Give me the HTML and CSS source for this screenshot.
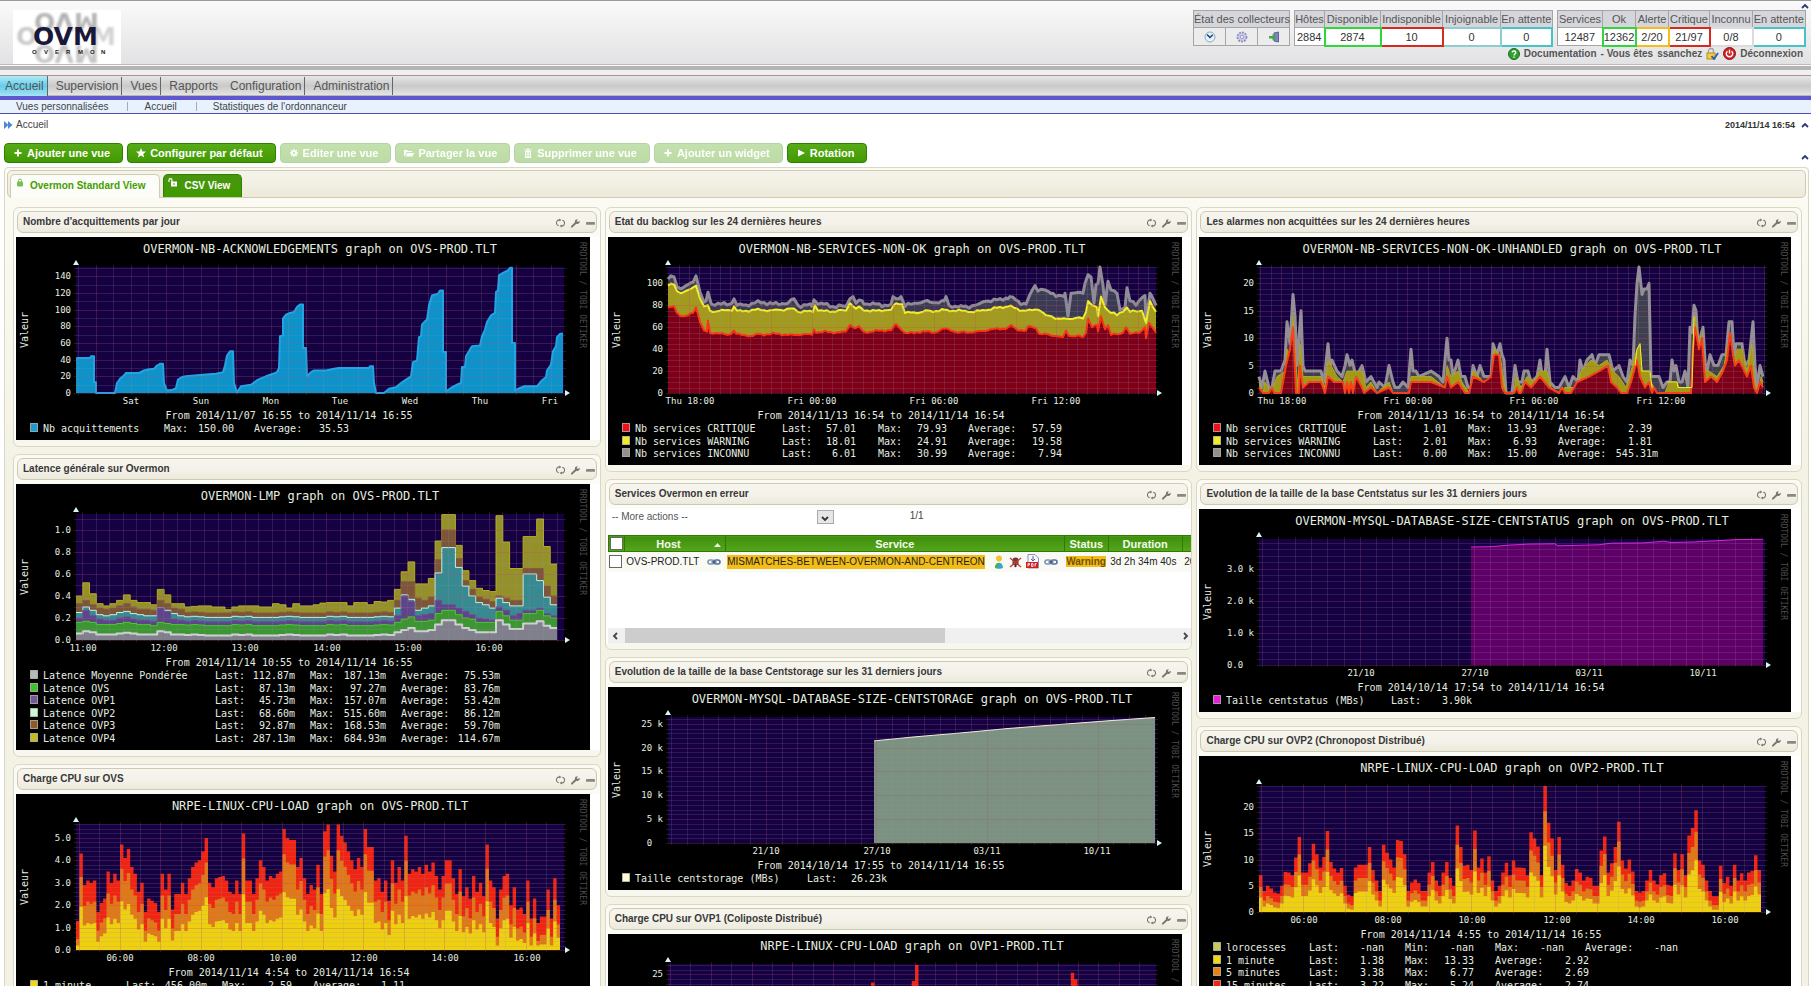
FILE: index.html
```html
<!DOCTYPE html>
<html lang="fr">
<head>
    <meta charset="UTF-8">
    <meta name="viewport" content="width=device-width, initial-scale=1.0">
    <title>Overmon - Accueil</title>
    <link rel="stylesheet" href="styles.css">
</head>
<body>
    <!-- shared icons -->
    <svg class="sprite" width="0" height="0" aria-hidden="true">
        <symbol id="i-refresh" viewBox="0 0 10 10"><path d="M4 1.5A3.3 3.3 0 0 0 3 8M6 8.5A3.3 3.3 0 0 0 7 2" fill="none" stroke="#77756c" stroke-width="1.2"/><path d="M3.5 0l2.5 1.6L3.6 3.4zM6.5 10L4 8.4l2.4-1.8z" fill="#77756c"/></symbol>
        <symbol id="i-wrench" viewBox="0 0 10 10"><path d="M1 9l4.5-4.2" stroke="#77756c" stroke-width="2.2" stroke-linecap="round"/><path d="M9.5 2.5L7.6 4 6.3 2.8 7.6.8A2.6 2.6 0 0 0 4.4 3.8L6 5.8a2.6 2.6 0 0 0 3.5-3.3z" fill="#77756c"/></symbol>
        <symbol id="i-minus" viewBox="0 0 10 10"><rect y="4" width="10" height="3" rx="1" fill="#8a887f"/></symbol>
        <symbol id="i-plus" viewBox="0 0 10 10"><path d="M5 1.5v7M1.5 5h7" stroke="#fff" stroke-width="1.8"/></symbol>
        <symbol id="i-star" viewBox="0 0 10 10"><path d="M5 0l1.4 3.4 3.6.2-2.8 2.3 1 3.6L5 7.5 1.8 9.5l1-3.6L0 3.6l3.6-.2z" fill="#fff"/></symbol>
        <symbol id="i-gear" viewBox="0 0 10 10"><path d="M5 1v8M1 5h8M2.2 2.2l5.6 5.6M7.8 2.2L2.2 7.8" stroke="#fff" stroke-width="1.4"/><circle cx="5" cy="5" r="2.6" fill="#fff"/><circle cx="5" cy="5" r="1.2" fill="#6fb53c"/></symbol>
        <symbol id="i-folder" viewBox="0 0 10 10"><path d="M0 8V2h3l1 1h4v1H2.5L1 8z" fill="#fff"/><path d="M3 5h7L8.5 8.5H1.7z" fill="#fff"/></symbol>
        <symbol id="i-trash" viewBox="0 0 10 10"><path d="M1.5 2h7M4 1h2" stroke="#fff" stroke-width="1.2"/><path d="M2.5 3.5h5v6h-5zM4.2 4v5M5.8 4v5" fill="none" stroke="#fff"/></symbol>
        <symbol id="i-play" viewBox="0 0 10 10"><path d="M2 1.5L9 5 2 8.5z" fill="#fff"/></symbol>
        <symbol id="i-caret" viewBox="0 0 8 6"><path d="M1 5l3-3 3 3" fill="none" stroke="#2b3a70" stroke-width="1.8"/></symbol>
        <symbol id="i-link" viewBox="0 0 14 10"><rect x="1" y="3" width="6" height="4" rx="2" fill="none" stroke="#7d93b5" stroke-width="1.6"/><rect x="7" y="3" width="6" height="4" rx="2" fill="none" stroke="#56709c" stroke-width="1.6"/><path d="M4.5 5h5" stroke="#3c5680" stroke-width="1.4"/></symbol>
    </svg>

    <header class="top">
        <svg class="logo" width="108" height="54" viewBox="0 0 108 54" role="img" aria-label="OVM Overmon">
            <defs>
                <filter id="soft"><feGaussianBlur stdDeviation="1"/></filter>
            </defs>
            <rect width="108" height="54" fill="#fff"/>
            <g class="ghost" filter="url(#soft)">
                <text x="3" y="35" fill="#c9c9c9">O</text>
                <text x="78" y="35" fill="#d4d4d4">M</text>
                <text transform="matrix(1 0 0 -1 0 0)" x="21" y="-3" fill="#b4b4b4">OVM</text>
                <text transform="matrix(1 0 0 -1 0 0)" x="21" y="-35" fill="#c6c6c6">OVM</text>
            </g>
            <text class="word" x="20" y="35">OVM</text>
            <text class="tag" x="19 31 42 53 65 77 88" y="44">OVERMON</text>
        </svg>
        <div class="status">
            <div class="status-tables">
                <table class="counts pollers">
                    <tr><th colspan="3">État des collecteurs</th></tr>
                    <tr>
                        <td><svg width="12" height="12" viewBox="0 0 12 12"><circle cx="6" cy="6" r="5" fill="#e3f3fb" stroke="#8fa9bd"/><path d="M3 3.5l3 3 2.8-2.7" fill="none" stroke="#1c3f70" stroke-width="1.5"/></svg></td>
                        <td><svg width="12" height="12" viewBox="0 0 12 12"><circle cx="6" cy="6" r="4.6" fill="#c9c9ea" stroke="#8d8dbd" stroke-dasharray="2 1" stroke-width="1.6"/><circle cx="6" cy="6" r="1.6" fill="#f2f2fb" stroke="#9c9cc8"/></svg></td>
                        <td><svg width="12" height="12" viewBox="0 0 12 12"><path d="M6 2l4.5-1v10L6 10z" fill="#7d86b8" stroke="#5c6596"/><path d="M1 5h3.5V3L8 6.3 4.5 9.5v-2H1z" fill="#3fa845"/></svg></td>
                    </tr>
                </table>
                <table class="counts hosts">
                    <tr><th>Hôtes</th><th>Disponible</th><th>Indisponible</th><th>Injoignable</th><th>En attente</th></tr>
                    <tr><td>2884</td><td class="up">2874</td><td class="down">10</td><td class="unreachable">0</td><td class="pending">0</td></tr>
                </table>
                <table class="counts services">
                    <tr><th>Services</th><th>Ok</th><th>Alerte</th><th>Critique</th><th>Inconnu</th><th>En attente</th></tr>
                    <tr><td>12487</td><td class="up">12362</td><td class="warn">2/20</td><td class="down">21/97</td><td class="unknown">0/8</td><td class="pending">0</td></tr>
                </table>
            </div>
            <div class="user">
                <svg width="12" height="12" viewBox="0 0 12 12"><circle cx="6" cy="6" r="5.5" fill="#2f9e2f" stroke="#1c6e1c"/><path d="M4.2 4.6c0-2.2 3.6-2.2 3.6 0C7.8 6 6 5.9 6 7.4M6 8.4v1.4" fill="none" stroke="#fff" stroke-width="1.4"/></svg>
                <a href="#">Documentation</a> - Vous êtes <a href="#">ssanchez</a>
                <svg width="13" height="13" viewBox="0 0 13 13"><path d="M2.5 6V4a2.5 2.5 0 0 1 5 0v2" fill="none" stroke="#a5a5a5" stroke-width="1.4"/><rect x="1" y="6" width="8" height="6" fill="#f4cf3a" stroke="#b08f1b"/><path d="M5.5 9l2.5 3 4-6" fill="none" stroke="#2a5bc0" stroke-width="1.8"/></svg>
                <svg width="13" height="13" viewBox="0 0 13 13"><circle cx="6.5" cy="6.5" r="6" fill="#cf2424" stroke="#8f1010"/><path d="M4.4 4.2a3.2 3.2 0 1 0 4.2 0M6.5 2.8v3.6" fill="none" stroke="#fff" stroke-width="1.4"/></svg>
                <a href="#">Déconnexion</a>
            </div>
        </div>
        <svg class="fold" width="8" height="6"><use href="#i-caret"/></svg>
    </header>

    <nav class="menu">
        <a href="#" class="active">Accueil</a>
        <a href="#">Supervision</a>
        <a href="#">Vues</a>
        <a href="#" class="open">Rapports</a>
        <a href="#">Configuration</a>
        <a href="#">Administration</a>
    </nav>
    <nav class="submenu">
        <a href="#">Vues personnalisées</a>
        <a href="#">Accueil</a>
        <a href="#">Statistiques de l'ordonnanceur</a>
    </nav>

    <div class="path">
        <svg width="9" height="8" viewBox="0 0 9 8"><path d="M0 0l4.5 4L0 8zM4 0l4.5 4L4 8z" fill="#4f86d6"/></svg>
        <a href="#">Accueil</a>
        <time>2014/11/14 16:54</time>
        <svg width="8" height="6"><use href="#i-caret"/></svg>
    </div>

    <div class="toolbar">
        <button type="button"><svg width="10" height="10"><use href="#i-plus"/></svg>Ajouter une vue</button>
        <button type="button"><svg width="10" height="10"><use href="#i-star"/></svg>Configurer par défaut</button>
        <button type="button" disabled><svg width="10" height="10"><use href="#i-gear"/></svg>Editer une vue</button>
        <button type="button" disabled><svg width="10" height="10"><use href="#i-folder"/></svg>Partager la vue</button>
        <button type="button" disabled><svg width="10" height="10"><use href="#i-trash"/></svg>Supprimer une vue</button>
        <button type="button" disabled><svg width="10" height="10"><use href="#i-plus"/></svg>Ajouter un widget</button>
        <button type="button"><svg width="10" height="10"><use href="#i-play"/></svg>Rotation</button>
        <svg class="fold" width="8" height="6"><use href="#i-caret"/></svg>
    </div>

    <main class="views">
        <div class="tabs">
            <a href="#" class="tab current"><svg width="8" height="9" viewBox="0 0 8 9"><path d="M2.5 4V2.5a1.5 1.5 0 0 1 3 0V4" fill="none" stroke="#79bd55"/><rect x="1" y="3.5" width="6" height="5" rx="1" fill="#79bd55"/></svg>Overmon Standard View</a>
            <a href="#" class="tab"><svg width="10" height="9" viewBox="0 0 10 9"><path d="M1 4V2.2a1.5 1.5 0 0 1 3 0V4" fill="none" stroke="#fff" stroke-width="1.2"/><path d="M3 3.5h6v5H3z" fill="#fff"/><path d="M6 5v2" stroke="#4a9a10"/></svg>CSV View</a>
        </div>

        <div class="columns">
            <div class="column">
                <section class="widget">
                    <div class="widget-head"><h3>Nombre d'acquittements par jour</h3></div>
                    <div class="widget-body"><svg class="graph" id="acknowledgements" width="574" height="203"></svg></div>
                </section>
                <section class="widget">
                    <div class="widget-head"><h3>Latence générale sur Overmon</h3></div>
                    <div class="widget-body"><svg class="graph" id="latency" width="574" height="266"></svg></div>
                </section>
                <section class="widget">
                    <div class="widget-head"><h3>Charge CPU sur OVS</h3></div>
                    <div class="widget-body"><svg class="graph" id="cpu-ovs" width="574" height="228"></svg></div>
                </section>
            </div>

            <div class="column">
                <section class="widget">
                    <div class="widget-head"><h3>Etat du backlog sur les 24 dernières heures</h3></div>
                    <div class="widget-body"><svg class="graph" id="backlog" width="574" height="228"></svg></div>
                </section>
                <section class="widget">
                    <div class="widget-head"><h3>Services Overmon en erreur</h3></div>
                    <div class="widget-body errors">
                        <div class="errors-bar">
                            <div class="picker">
                                <select aria-label="More actions"><option>-- More actions --</option></select>
                                <span class="picker-arrow"><svg width="8" height="6" viewBox="0 0 8 6"><path d="M1 1l3 3 3-3" fill="none" stroke="#333" stroke-width="1.8"/></svg></span>
                            </div>
                            <span class="pages">1/1</span>
                        </div>
                        <div class="errors-scroll">
                            <table class="errors-table">
                                <colgroup><col class="c-tick"><col class="c-host"><col class="c-service"><col class="c-status"><col class="c-duration"><col class="c-check"></colgroup>
                                <thead>
                                    <tr>
                                        <th><input type="checkbox" aria-label="Tout sélectionner"></th>
                                        <th class="sorted">Host <svg width="7" height="4" viewBox="0 0 7 4"><path d="M0 4l3.5-4L7 4z" fill="#e6f5d8"/></svg></th>
                                        <th>Service</th><th>Status</th><th>Duration</th><th></th>
                                    </tr>
                                </thead>
                                <tbody>
                                    <tr>
                                        <td><input type="checkbox" aria-label="OVS-PROD.TLT"></td>
                                        <td><div class="cell"><a href="#">OVS-PROD.TLT</a><svg width="14" height="10"><use href="#i-link"/></svg></div></td>
                                        <td>
                                            <div class="cell">
                                                <a href="#" class="flag">MISMATCHES-BETWEEN-OVERMON-AND-CENTREON</a>
                                                <span class="marks">
                                                    <svg width="12" height="14" viewBox="0 0 12 14"><circle cx="6" cy="3.600" r="3" fill="#f2c230"/><path d="M2 13c0-7 8-7 8 0-2 1-6 1-8 0z" fill="#35a6c4"/><path d="M2 13c0-3 1-4 3-5v5z" fill="#4db04a"/></svg>
                                                    <svg width="13" height="13" viewBox="0 0 13 13"><path d="M3.5 10V5.5a3 3 0 0 1 6 0V10z" fill="#6a3a34"/><path d="M1 3l11 9M12 3L1 12" stroke="#c63a34" stroke-width="1.4"/><circle cx="6.5" cy="11" r="1.2" fill="#333"/></svg>
                                                    <svg width="14" height="15" viewBox="0 0 14 15"><path d="M2 .5h7L12.5 4v10H2z" fill="#f7f7fb" stroke="#8d8db8"/><path d="M7 2v5M5 5l2 2 2-2" fill="none" stroke="#5a5ab0"/><rect y="8" width="12" height="6" fill="#cf2020"/><path d="M2 12.500v-3h1.500v1.500H2M5.500 9.500v3h1.500v-3zM9 12.500v-3h1.500M9 11h1" fill="none" stroke="#fff" stroke-width=".8"/></svg>
                                                    <svg width="14" height="10"><use href="#i-link"/></svg>
                                                </span>
                                            </div>
                                        </td>
                                        <td><span class="flag state">Warning</span></td>
                                        <td>3d 2h 34m 40s</td>
                                        <td>2014</td>
                                    </tr>
                                </tbody>
                            </table>
                        </div>
                        <div class="hscroll">
                            <svg width="6" height="8" viewBox="0 0 6 8"><path d="M5 1L2 4l3 3" fill="none" stroke="#444" stroke-width="1.8"/></svg>
                            <div class="track"><div class="thumb"></div></div>
                            <svg width="6" height="8" viewBox="0 0 6 8"><path d="M1 1l3 3-3 3" fill="none" stroke="#444" stroke-width="1.8"/></svg>
                        </div>
                    </div>
                </section>
                <section class="widget">
                    <div class="widget-head"><h3>Evolution de la taille de la base Centstorage sur les 31 derniers jours</h3></div>
                    <div class="widget-body"><svg class="graph" id="centstorage" width="574" height="203"></svg></div>
                </section>
                <section class="widget">
                    <div class="widget-head"><h3>Charge CPU sur OVP1 (Coliposte Distribué)</h3></div>
                    <div class="widget-body"><svg class="graph" id="cpu-ovp1" width="574" height="241"></svg></div>
                </section>
            </div>

            <div class="column">
                <section class="widget">
                    <div class="widget-head"><h3>Les alarmes non acquittées sur les 24 dernières heures</h3></div>
                    <div class="widget-body"><svg class="graph" id="unhandled" width="592" height="228"></svg></div>
                </section>
                <section class="widget">
                    <div class="widget-head"><h3>Evolution de la taille de la base Centstatus sur les 31 derniers jours</h3></div>
                    <div class="widget-body"><svg class="graph" id="centstatus" width="592" height="203"></svg></div>
                </section>
                <section class="widget">
                    <div class="widget-head"><h3>Charge CPU sur OVP2 (Chronopost Distribué)</h3></div>
                    <div class="widget-body"><svg class="graph" id="cpu-ovp2" width="592" height="241"></svg></div>
                </section>
            </div>
        </div>
    </main>

    <script src="graphs.js"></script>
</body>
</html>
```
FILE: styles.css
```css
* {
    box-sizing: border-box;
}

body {
    margin: 0;
    background-color: #fff;
    color: #444;
    font-family: Arial, "Liberation Sans", sans-serif;
    font-size: 10px;
}

a {
    color: inherit;
    text-decoration: none;
}

svg {
    flex: none;
}

.sprite {
    position: absolute;
}

/* header */
.top {
    position: relative;
    display: flex;
    justify-content: space-between;
    height: 75px;
    padding: 9px 5px 0 13px;
    border-top: 1px solid #999;
    background: linear-gradient(#fafafa, #e2e2e4 63px, #c9b9b0 63px, #c9b9b0 64px, #fafafa 64px, #fafafa 65px, #b1b6ba 65px, #b1b6ba 69px, #f4efee 69px);
}

.logo .ghost text,
.logo .word {
    font-family: "DejaVu Sans", sans-serif;
    font-size: 25px;
    font-weight: bold;
}

.logo .word {
    fill: #1a1838;
}

.logo .tag {
    font-size: 6px;
    font-weight: bold;
    fill: #222;
}

.status {
    display: flex;
    flex-direction: column;
    align-items: flex-end;
}

.status-tables {
    display: flex;
    gap: 4px;
}

.counts {
    height: 36px;
    border-collapse: collapse;
    table-layout: fixed;
    font-size: 11px;
    line-height: 14px;
}

.counts th,
.counts td {
    padding: 0;
    border: 1px solid #a5a5a5;
    font-weight: normal;
    text-align: center;
    white-space: nowrap;
}

.counts th {
    height: 17px;
    background-color: #d5d5dc;
    color: #555;
}

.counts td {
    height: 18px;
    background-color: #fff;
    color: #333;
}

.counts svg {
    display: block;
    margin: 0 auto;
}

.counts.pollers { width: 97px; }
.counts.pollers td { background-color: #ececec; }
.hosts { width: 259px; }
.hosts th:nth-child(1) { width: 30px; }
.hosts th:nth-child(2) { width: 56px; }
.hosts th:nth-child(3) { width: 62px; }
.hosts th:nth-child(4) { width: 58px; }
.services { width: 249px; }
.services th:nth-child(1) { width: 45px; }
.services th:nth-child(2) { width: 33px; }
.services th:nth-child(3) { width: 33px; }
.services th:nth-child(4) { width: 41px; }
.services th:nth-child(5) { width: 43px; }

.counts .up { border: 2px solid #31d63a; }
.counts .down { border: 2px solid #d62b1c; }
.counts .warn { border: 2px solid #f2bd1d; }
.counts .unreachable { border: 2px solid #8ccdd0; }
.counts .pending { border: 2px solid #46c3c6; }
.counts .unknown { border: 2px solid #dcdcdc; }

.user {
    display: flex;
    align-items: center;
    gap: 4px;
    height: 14px;
    padding-right: 3px;
    font-weight: bold;
    color: #555;
}

.top .fold {
    position: absolute;
    top: 2px;
    right: 2px;
}

/* menus */
.menu {
    display: flex;
    align-items: center;
    height: 25px;
    border-top: 1px solid #999;
    border-bottom: 4px solid #6057cc;
    background: linear-gradient(#e6e6e6, #c9c9c9 50%, #e4e4e4 94%, #999);
    font-size: 12px;
    color: #555;
}

.menu a {
    padding: 2px 3px 2px 8px;
    border-right: 1px solid #666;
}

.menu .active {
    padding: 3px 3px 3px 5px;
    background: linear-gradient(#b4e9f6, #63cdea 50%, #a5e3f4);
}

.menu .open {
    border-right-color: transparent;
}

.submenu {
    display: flex;
    align-items: center;
    height: 14px;
    padding-left: 16px;
    border-bottom: 1px solid #4e4eb8;
    background-color: #e8f2fe;
}

.submenu a + a {
    margin-left: 19px;
    padding-left: 16px;
    border-left: 1px solid #aab;
    line-height: 9px;
}

.path {
    display: flex;
    align-items: center;
    gap: 3px;
    height: 19px;
    padding: 2px 2px 0 4px;
}

.path time {
    margin-left: auto;
    padding-right: 3px;
    font-size: 9px;
    font-weight: bold;
    color: #333;
}

.toolbar {
    display: flex;
    align-items: center;
    gap: 4px;
    margin-top: 10px;
    padding: 0 2px 0 4px;
}

.toolbar button {
    display: flex;
    align-items: center;
    gap: 4px;
    height: 20px;
    padding: 0 12px 0 8px;
    border: 1px solid #2f8000;
    border-radius: 4px;
    background: linear-gradient(#57ab18, #419a00);
    color: #fff;
    font: bold 11px Arial, "Liberation Sans", sans-serif;
}

.toolbar button:disabled {
    opacity: .35;
}

.toolbar .fold {
    margin-left: auto;
    align-self: flex-end;
    margin-bottom: 3px;
}

/* views */
.views {
    margin: 4px 2px 0 4px;
    padding: 2px 2px 10px;
    border: 1px solid #dad8c2;
    border-radius: 4px;
    background: linear-gradient(#fbfbf6, #fafaf1 80px, #f4f2e4 300px);
}

.tabs {
    display: flex;
    gap: 3px;
    height: 28px;
    padding: 3px 2px 0;
    border: 1px solid #cfccb0;
    border-radius: 5px;
    background: linear-gradient(#f6f3ea, #f1efe2 60%, #ece8da);
}

.tab {
    display: flex;
    align-items: center;
    gap: 6px;
    padding: 0 11px 2px 4px;
    border: 1px solid #2f8000;
    border-bottom: 0;
    border-radius: 5px 5px 0 0;
    background: linear-gradient(#489510, #419a00);
    color: #fff;
    font-weight: bold;
}

.tab svg {
    align-self: flex-start;
    margin-top: 3px;
}

.tab.current {
    padding: 0 14px 2px 5px;
    margin-bottom: -1px;
    border-color: #cfccb0;
    background: #fcfcf8;
    color: #459e00;
}

.columns {
    display: grid;
    grid-template-columns: 33fr 33fr 34fr;
    gap: 4px;
    align-items: start;
    padding: 9px 4px 0 6px;
}

.column {
    display: grid;
    grid-template-columns: 100%;
    gap: 7px;
}

.widget {
    min-width: 0;
    padding: 3px 0 6px;
    border: 1px solid #dad8c4;
    border-radius: 6px;
    background: linear-gradient(#fafaf2, #fdfdf8 40px, #f8f7ee);
}

.widget-head {
    display: flex;
    align-items: center;
    gap: 6px;
    height: 22px;
    margin: 0 3px 4px;
    padding: 0 1px 2px 5px;
    border: 1px solid #cdcab4;
    border-radius: 6px;
    background: linear-gradient(#f7f5ef, #f3f1e8 60%, #ece9dc);
}

.widget-head h3 {
    flex: 1;
    margin: 0;
    font-size: 10px;
    color: #383838;
}

.widget-head button {
    display: block;
    width: 9px;
    height: 10px;
    padding: 0;
    border: 0;
    background: none;
}

.widget-body {
    padding-left: 2px;
    background-color: #fff;
}

/* graphs */
.graph {
    display: block;
    max-width: 100%;
    background-color: #000;
    font-family: "DejaVu Sans Mono", monospace;
    font-size: 10px;
    fill: #e6ede0;
}

.graph .title { font-size: 12px; }
.graph .tick { font-size: 9px; }
.graph .credit { font-size: 8px; fill: #4d4d4d; }

/* services in error */
.errors {
    height: 134px;
    display: flex;
    flex-direction: column;
}

.errors-bar {
    display: flex;
    align-items: flex-start;
    height: 26px;
}

.picker {
    position: relative;
    width: 226px;
}

.picker select {
    width: 100%;
    height: 14px;
    padding: 0 4px;
    border: 0;
    appearance: none;
    background: none;
    color: #555;
    font: 10px Arial, "Liberation Sans", sans-serif;
}

.picker-arrow {
    position: absolute;
    top: 1px;
    right: 0;
    display: flex;
    align-items: flex-end;
    justify-content: center;
    width: 17px;
    height: 14px;
    padding-bottom: 1px;
    border: 1px solid #aaa;
    background-color: #e6e6e6;
    pointer-events: none;
}

.pages {
    margin: 1px 0 0 76px;
}

.errors-scroll {
    flex: 1;
    overflow: hidden;
}

.errors-table {
    width: 760px;
    table-layout: fixed;
    border-collapse: collapse;
    color: #222;
}

.c-tick { width: 16px; }
.c-host { width: 101px; }
.c-service { width: 339px; }
.c-status { width: 44px; }
.c-duration { width: 74px; }

.errors-table th {
    height: 16px;
    padding: 0;
    border: 1px solid #2f7a05;
    background: linear-gradient(#3f8f0c, #55a61c);
    color: #f2fbe9;
    font-size: 11px;
    line-height: 14px;
}

.errors-table .sorted svg {
    margin-left: 30px;
    vertical-align: middle;
}

.errors-table .sorted {
    text-align: right;
    padding-right: 4px;
}

.errors-table td {
    height: 20px;
    padding: 0 2px;
    background-color: #fafaf4;
    white-space: nowrap;
}

.errors-table input {
    display: block;
    width: 13px;
    height: 13px;
    margin: 0 0 0 1px;
    appearance: none;
    border: 1px solid #666;
    background-color: #fff;
}

.errors-table td:first-child {
    padding: 0;
}

.cell {
    display: flex;
    align-items: center;
    gap: 8px;
}

.flag {
    background-color: #f3bd16;
    line-height: 14px;
}

.state {
    color: #73520a;
    font-weight: bold;
}

.marks {
    display: flex;
    align-items: center;
    gap: 4px;
}

.hscroll {
    display: flex;
    align-items: center;
    gap: 7px;
    height: 15px;
    padding: 0 2px 0 4px;
    background-color: #f0f0f0;
}

.track {
    flex: 1;
    height: 15px;
}

.thumb {
    width: 58%;
    height: 15px;
    background-color: #cdcdcd;
}
```
FILE: graphs.js
```js
const PLOT_X = 60, PLOT_Y = 30, PLOT_H = 126;
const num = n => Number(n.toFixed(1));

// "x:value x:value" -> [[x, value], ...]
const parse = s => s.trim().split(/\s+/).map(p => p.split(":").map(Number));

// one value per interval, drawn as a staircase
function stairs(values, width) {
    const step = width / values.length;
    return values.flatMap((v, i) => [[i * step, v], [(i + 1) * step, v]]);
}

// adds small regular ripples between the key points
function ripple(points, amount, seed) {
    const out = [];
    for (let i = 0; i < points.length - 1; i++) {
        const [x0, v0] = points[i], [x1, v1] = points[i + 1];
        out.push(points[i]);
        for (let x = x0 + 3; x < x1 - 1; x += 3) {
            const r = Math.sin(x * 1.7 + seed) * Math.sin(x * 0.61) + Math.sin(x * 0.37) * 0.6;
            out.push([x, v0 + (v1 - v0) * (x - x0) / (x1 - x0) + r * amount]);
        }
    }
    out.push(points[points.length - 1]);
    return out;
}

function text(x, y, content, anchor, cls) {
    return `<text x="${x}" y="${y}" text-anchor="${anchor || "start"}" class="${cls || ""}">${content}</text>`;
}

function draw(id, g) {
    const svg = document.getElementById(id);
    const w = +svg.getAttribute("width"), h = +svg.getAttribute("height");
    const pw = w - 86, bottom = PLOT_Y + PLOT_H, right = PLOT_X + pw;
    const py = v => num(bottom - v / g.max * PLOT_H);
    svg.setAttribute("viewBox", `0 0 ${w} ${h}`);
    svg.setAttribute("role", "img");
    svg.setAttribute("aria-label", g.title);

    let out = text(w / 2 + 17, 16, g.title, "middle", "title");
    out += `<rect x="${PLOT_X}" y="${PLOT_Y}" width="${pw}" height="${PLOT_H}" fill="#150041"/>`;

    g.series.forEach(s => {
        const line = s.points.map(([x, v]) => `${num(PLOT_X + x)},${py(Math.max(0, v))}`).join(" ");
        const first = PLOT_X + s.points[0][0], last = PLOT_X + s.points[s.points.length - 1][0];
        out += `<polygon points="${num(first)},${bottom} ${line} ${num(last)},${bottom}" fill="${s.fill}"/>`;
        if (s.line) {
            out += `<polyline points="${line}" fill="none" stroke="${s.line}" stroke-width="${s.width || 2}" stroke-linejoin="round"/>`;
        }
    });

    // grid, over the areas
    const [start, step, every, phase] = g.vertical;
    let minor = "", major = "";
    for (let i = 0, x = start; x < pw; i++, x += step) {
        const d = `M${Math.round(PLOT_X + x) + 0.5} ${PLOT_Y - 2}V${bottom + 2}`;
        if (i % every === phase) major += d; else minor += d;
    }
    const [hStep, hEvery] = g.horizontal;
    for (let i = 0; i * hStep <= g.max; i++) {
        const d = `M${PLOT_X - 2} ${Math.round(py(i * hStep)) + 0.5}H${right + 2}`;
        if (i % hEvery === 0) major += d; else minor += d;
    }
    out += `<path d="${minor}" stroke="#9a8fb0" stroke-opacity=".18" fill="none"/>`;
    out += `<path d="${major}" stroke="#b0507a" stroke-opacity=".28" fill="none"/>`;
    out += `<path d="M${PLOT_X} ${PLOT_Y - 7}l3 5h-6zM${right + 6} ${bottom}l-5-3v6z" fill="#d8f4f8"/>`;

    g.yTicks.forEach(([v, label]) => out += text(55, Math.round(py(v)) + 3, label, "end", "tick"));
    g.xTicks.forEach(([x, label]) => out += text(x, 167, label, "middle", "tick"));
    out += `<text transform="translate(12 93) rotate(-90)" text-anchor="middle">Valeur</text>`;
    out += `<text transform="translate(${w - 10} 5) rotate(90)" class="credit">RRDTOOL / TOBI OETIKER</text>`;
    out += text(w / 2 - 14, 182, g.period, "middle");

    g.legend.forEach(([color, cells, own], i) => {
        const y = Math.round(195 + i * 12.6), cols = own || g.cols;
        out += `<rect x="14.5" y="${y - 8.5}" width="7" height="8" fill="${color}" stroke="#cfcfb8" stroke-opacity=".7"/>`;
        out += text(27, y, cells[0]);
        // labels sit on the odd cells, right-aligned numbers on the even ones
        cells.slice(1).forEach((c, k) => out += text(cols[k], y, c, k % 2 ? "end" : "start"));
    });
    svg.innerHTML = out;
}

draw("acknowledgements", {
    title: "OVERMON-NB-ACKNOWLEDGEMENTS graph on OVS-PROD.TLT",
    period: "From 2014/11/07 16:55 to 2014/11/14 16:55",
    max: 151,
    vertical: [2, 17.5, 4, 1],
    horizontal: [10, 2],
    yTicks: [0, 20, 40, 60, 80, 100, 120, 140].map(v => [v, v]),
    xTicks: [[115, "Sat"], [185, "Sun"], [255, "Mon"], [324, "Tue"], [394, "Wed"], [464, "Thu"], [534, "Fri"]],
    series: [{
        fill: "#0d93c9", line: "#1fa5e6", width: 2,
        points: parse(`0:41 2:42 14:42 15:44 18:44 18:13 20:13 20:0 39:0 41:12 44:17 47:20 50:24 63:24 68:27 72:28 78:29 81:33
            84:35 87:35 88:12 91:3 97:4 100:6 102:16 106:19 110:20 130:22 140:23 147:25 149:33 151:45 154:50 157:50 158:12
            161:1 165:8 175:10 182:16 190:20 197:23 201:25 203:30 204:68 207:69 207:89 210:94 214:96 218:97 221:103 224:106
            227:106 227:54 230:54 231:20 235:25 238:27 250:27 258:29 263:30 293:30 294:32 297:32 298:12 300:0 308:0 313:5 320:7
            325:12 330:16 335:20 337:37 341:39 343:67 345:68 346:82 349:86 351:88 353:105 356:117 362:119 364:123 367:123
            367:49 370:49 370:2 375:6 381:10 385:12 386:31 389:31 390:44 394:52 396:56 404:57 406:68 409:76 411:85 415:93
            419:96 420:121 422:123 423:141 427:144 432:147 434:150 436:150 436:60 439:60 439:3 444:6 448:8 461:8 465:14
            470:19 471:27 475:34 477:50 480:56 481:67 484:71 487:71`)
    }],
    cols: [148, 218, 238, 333],
    legend: [["#1a9ad8", ["Nb acquittements", "Max:", "150.00", "Average:", "35.53"]]]
});

// latency: the quiet middle of the day is the same for every poller
const flat = (n, v) => Array.from({ length: n }, (_, i) => v + (i % 7 < 3 ? 0.01 : 0) * (i % 2 ? 1 : 0.6));
const latency = {
    ovp4: [.4, .52, .42, .33, .31, .33, .36, .41, .36, .34, .34, .32, .46, .41, .33, .33, .3, .305, .31, .31, .3, .3, .275, .3, .31,
        .31, .31, .3, .3, .33, .32, .29, .33, .31, .31, .32, .335, .34, .34, .34, .31, .34, .34, .32, .35, .345, .36, .46, .62, .71,
        .51, .51, .56, .9, 1.14, 1.14, .86, .63, .54, .47, .45, .44, 1.13, .89, .65, .65, .94, .94, 1.1, .85, .69],
    ovp3: [.33, .36, .32, .29, .28, .29, .31, .33, .3, .28, .28, .27, .36, .33, .29, .28, ...flat(31, .245), .36, .53, .53,
        .38, .36, .39, .73, 1, 1, .74, .54, .46, .39, .37, .35, .4, .38, .36, .36, .65, .65, .65, .49, .4],
    ovp2: [.25, .3, .27, .23, .22, .23, .25, .26, .24, .23, .22, .22, .29, .27, .24, .22, ...flat(31, .205), .29, .41, .37,
        .27, .29, .31, .61, .84, .84, .66, .49, .4, .34, .32, .29, .38, .34, .31, .31, .6, .6, .54, .39, .32],
    ovp1: [.2, .27, .22, .19, .18, .18, .2, .21, .19, .18, .18, .17, .29, .26, .19, .18, ...flat(31, .165), .22, .4, .35,
        .22, .23, .24, .36, .32, .32, .29, .26, .23, .2, .19, .18, .3, .27, .22, .24, .27, .27, .29, .24, .22],
    ovs: [.16, .17, .16, .14, .14, .14, .15, .16, .15, .14, .14, .13, .16, .15, .14, .14, ...flat(31, .13), .16, .19, .21,
        .17, .17, .18, .24, .27, .27, .23, .2, .19, .16, .16, .16, .26, .22, .18, .18, .24, .24, .27, .22, .2],
    mean: [.06, .08, .07, .05, .05, .05, .06, .065, .06, .05, .05, .05, .08, .07, .05, .05, ...flat(31, .04), .07, .09, .11,
        .08, .08, .09, .14, .18, .18, .14, .11, .09, .07, .07, .07, .18, .14, .1, .1, .15, .15, .17, .13, .11]
};
draw("latency", {
    title: "OVERMON-LMP graph on OVS-PROD.TLT",
    period: "From 2014/11/14 10:55 to 2014/11/14 16:55",
    max: 1.145,
    vertical: [6, 13.56, 6, 0],
    horizontal: [0.1, 2],
    yTicks: [0, 0.2, 0.4, 0.6, 0.8, 1].map(v => [v, v.toFixed(1)]),
    xTicks: [[67, "11:00"], [148, "12:00"], [229, "13:00"], [311, "14:00"], [392, "15:00"], [473, "16:00"]],
    series: [
        { fill: "#94902a", line: "#b5ad1c", width: 1, points: stairs(latency.ovp4, 481) },
        { fill: "#7b5638", line: "#8c5a3c", width: 1, points: stairs(latency.ovp3, 481) },
        { fill: "#368a90", line: "#c8f2e4", width: 1, points: stairs(latency.ovp2, 481) },
        { fill: "#5d4589", line: "#6d4f9c", width: 1, points: stairs(latency.ovp1, 481) },
        { fill: "#3c9733", line: "#4cc82e", width: 1, points: stairs(latency.ovs, 481) },
        { fill: "#80808c", line: "#d0d0d4", width: 2, points: stairs(latency.mean, 481) }
    ],
    cols: [199, 279, 294, 370, 385, 484],
    legend: [
        ["#b8b8c0", ["Latence Moyenne Pondérée", "Last:", "112.87m", "Max:", "187.13m", "Average:", "75.53m"]],
        ["#3bc42c", ["Latence OVS", "Last:", "87.13m", "Max:", "97.27m", "Average:", "83.76m"]],
        ["#74559f", ["Latence OVP1", "Last:", "45.73m", "Max:", "157.07m", "Average:", "53.42m"]],
        ["#c8f8d8", ["Latence OVP2", "Last:", "68.60m", "Max:", "515.60m", "Average:", "86.12m"]],
        ["#8c5a2c", ["Latence OVP3", "Last:", "92.87m", "Max:", "168.53m", "Average:", "59.70m"]],
        ["#c4bc1c", ["Latence OVP4", "Last:", "287.13m", "Max:", "684.93m", "Average:", "114.67m"]]
    ]
});

// cpu load: 15 minutes over 5 minutes over 1 minute
function cpu(values, width, mid, low) {
    return [
        { fill: "#f02410", points: stairs(values, width) },
        { fill: "#e07818", points: stairs(values.map(v => Math.max(0.3, v * mid[0] - mid[1])), width) },
        { fill: "#eed010", points: stairs(values.map(v => Math.max(0.2, v * low[0] - low[1])), width) }
    ];
}

draw("cpu-ovs", {
    title: "NRPE-LINUX-CPU-LOAD graph on OVS-PROD.TLT",
    period: "From 2014/11/14 4:54 to 2014/11/14 16:54",
    max: 5.62,
    vertical: [3, 20.3, 2, 0],
    horizontal: [0.2, 5],
    yTicks: [0, 1, 2, 3, 4, 5].map(v => [v, v.toFixed(1)]),
    xTicks: [[104, "06:00"], [185, "08:00"], [267, "10:00"], [348, "12:00"], [429, "14:00"], [511, "16:00"]],
    series: cpu([1.3, 4.3, 2.9, 3.1, 3, 3.1, 1.7, 2.1, 2.3, 3.5, 3, 3.4, 3.1, 4.7, 4.1, 4.5, 3.7, 3.4, 2.6, 3, 1.7, 2.3, 2.2, 2.1,
        1.7, 3.4, 2.7, 3.4, 1.8, 2.5, 2.5, 3, 2.5, 3.2, 3.7, 3.9, 4, 4.4, 5, 3, 2.8, 3.2, 3.25, 3.3, 3.1, 2.6, 2.5, 3.1, 2.5, 5.2,
        3.1, 3.1, 2.5, 3.2, 4, 3.7, 3.1, 3.3, 3.2, 3.4, 3.5, 5.4, 5, 4.9, 4.9, 3.7, 4.1, 3.2, 2.5, 2.9, 2.7, 3.8, 2.5, 5.3, 5.6,
        4.2, 3.5, 5.6, 5.1, 4.8, 4.4, 4, 3.6, 4.1, 3.7, 5.4, 4.6, 4.6, 3.1, 3.2, 2.6, 3.1, 2.2, 4, 3, 3.7, 3.1, 5.1, 3.4, 3.6,
        3.5, 3.7, 3.4, 3.8, 3.5, 3.9, 3.3, 2.7, 3.3, 4, 4, 3.2, 2.5, 3.6, 2.4, 2.8, 2.3, 3.3, 2.6, 3, 2.4, 4.7, 3.1, 2.8, 1.4,
        2.7, 3.3, 3.4, 2, 2.8, 1.8, 1.9, 1.6, 3.1, 1.4, 2.3, 1.2, 1.5, 1.5, 2.7, 1.4, 3.2, 2], 484, [0.92, 0.7], [0.6, 0.65]),
    cols: [110, 191, 206, 276, 297, 389],
    legend: [
        ["#f0d810", ["1 minute", "Last:", "456.00m", "Max:", "2.59", "Average:", "1.11"]],
        ["#e88018", ["5 minutes", "Last:", "1.25", "Max:", "2.02", "Average:", "1.12"]],
        ["#f02410", ["15 minutes", "Last:", "1.51", "Max:", "1.83", "Average:", "1.13"]]
    ]
});

draw("backlog", {
    title: "OVERMON-NB-SERVICES-NON-OK graph on OVS-PROD.TLT",
    period: "From 2014/11/13 16:54 to 2014/11/14 16:54",
    max: 115,
    vertical: [11, 10.2, 4, 1],
    horizontal: [5, 4],
    yTicks: [0, 20, 40, 60, 80, 100].map(v => [v, v]),
    xTicks: [[82, "Thu 18:00"], [204, "Fri 00:00"], [326, "Fri 06:00"], [448, "Fri 12:00"]],
    series: [
        {
            fill: "#3a3a52", line: "#8f8b96", width: 3,
            points: ripple(parse(`0:104 6:106 9:97 13:95 20:99 25:101 28:107 32:92 36:83 38:84 40:92 43:82 44:81 64:82 66:86 69:80
                84:82 120:82 126:86 130:80 144:79 146:85 150:81 178:79 182:86 185:88 188:82 191:85 196:81 223:81 225:88 228:86
                233:88 237:79 250:82 262:83 276:84 278:88 281:80 295:79 310:81 320:84 340:86 342:88 350:84 358:81 362:90 367:98
                370:93 377:94 385:91 396:88 397:91 400:70 403:91 415:91 417:100 420:108 423:106 426:82 428:99 430:100 432:115
                435:98 437:80 440:102 443:94 449:91 452:76 457:78 459:96 462:84 468:80 474:87 477:89 478:66 482:91 484:88 488:80`), 1.6, 2)
        },
        {
            fill: "#a39a1c", line: "#f4ee2a", width: 2,
            points: ripple(parse(`0:98 6:99 9:93 13:91 20:94 28:98 32:86 36:79 40:80 42:75 64:75 66:79 69:75 110:76 126:77 130:74
                145:74 147:80 150:75 178:75 182:82 188:77 191:79 196:75 223:76 228:82 234:81 237:73 262:75 276:76 300:74 320:76
                340:79 358:75 370:76 378:71 390:68 415:68 418:74 420:84 424:80 429:78 430:70 433:88 437:78 443:73 449:71 459:78
                462:74 474:75 478:64 482:84 488:74`), 1, 3)
        },
        {
            fill: "#7d0018", line: "#ff3010", width: 2,
            points: ripple(parse(`0:78 6:79 9:73 13:70 20:71 25:73 28:78 32:65 36:57 39:56 40:66 42:55 60:53 66:57 68:54 85:52 90:54
                144:53 146:58 148:55 178:56 182:62 187:59 191:61 196:56 223:57 228:63 234:57 237:55 270:56 276:59 290:55 320:57
                340:60 343:62 350:57 358:57 360:61 368:59 371:54 385:52 395:51 398:57 401:52 415:51 418:55 420:68 424:60 429:62
                430:56 433:70 437:58 440:62 443:53 455:55 458:60 462:54 474:57 477:60 478:50 481:64 488:55`), 1, 5)
        }
    ],
    cols: [174, 248, 270, 339, 360, 454],
    legend: [
        ["#f0101c", ["Nb services CRITIQUE", "Last:", "57.01", "Max:", "79.93", "Average:", "57.59"]],
        ["#f0ec28", ["Nb services WARNING", "Last:", "18.01", "Max:", "24.91", "Average:", "19.58"]],
        ["#928e92", ["Nb services INCONNU", "Last:", "6.01", "Max:", "30.99", "Average:", "7.94"]]
    ]
});

draw("unhandled", {
    title: "OVERMON-NB-SERVICES-NON-OK-UNHANDLED graph on OVS-PROD.TLT",
    period: "From 2014/11/13 16:54 to 2014/11/14 16:54",
    max: 23,
    vertical: [1, 10.5, 4, 2],
    horizontal: [1, 5],
    yTicks: [0, 5, 10, 15, 20].map(v => [v, v]),
    xTicks: [[83, "Thu 18:00"], [209, "Fri 00:00"], [335, "Fri 06:00"], [462, "Fri 12:00"]],
    series: [
        {
            fill: "#3f3f4f", line: "#938f94", width: 3,
            points: parse(`0:3 3:1 6:4 10:1 13:1 16:4 22:4 26:6 28:13 31:9 34:18 36:14 38:5 42:15 44:5 46:4 62:4 65:2 69:9 71:5 73:6 78:4
                83:3 86:5 88:7 91:5 93:6 97:3 103:5 107:2 112:3 118:1 120:2 126:1 130:5 134:2 136:1 140:1 144:2 149:1 152:8 154:4
                157:4 160:3 172:4 180:3 184:2 188:10 190:6 192:6 194:3 199:6 202:3 206:3 209:1 212:1 214:5 218:3 221:5 225:3 232:3
                234:9 238:7 241:9 243:7 245:6 247:0 253:0 256:5 259:2 263:2 265:4 269:4 272:2 278:3 281:6 284:2 286:3 288:8 291:2
                296:1 300:1 306:3 310:1 314:3 319:2 321:6 324:4 328:6 333:7 336:5 340:7 350:7 354:4 360:5 364:3 368:2 371:6 374:5
                376:14 378:20 380:23 383:18 385:19 388:19 390:20 392:3 400:3 404:1 408:2 411:2 413:6 415:4 417:5 420:2 423:2
                426:4 429:1 431:12 433:11 435:16 437:15 439:9 441:10 444:12 447:3 451:7 455:5 459:5 463:7 467:7 470:13 473:13
                475:7 477:9 483:9 486:5 490:6 494:13 496:5 498:1 501:5 504:3`)
        },
        {
            fill: "#a39a14", line: "#b9a818", width: 1,
            points: parse(`0:2 4:0 6:2 12:0 18:3 26:4 28:8 31:7 34:14 37:5 39:1 41:9 44:3 48:3 62:3 66:1 69:6 78:3 84:2 88:4 103:4
                107:1 112:2 118:0 130:2 134:0 150:0 152:3 172:3 186:1 188:5 192:3 199:4 203:2 210:0 214:4 225:2 232:3 235:8 241:7
                245:2 247:0 255:0 257:3 262:1 268:3 275:2 281:4 288:4 292:1 300:0 306:1 318:1 322:4 332:6 340:5 348:6 354:4
                360:3 367:1 372:4 378:8 381:9 383:4 390:4 392:2 398:0 406:0 410:2 418:2 420:1 432:1 434:8 436:14 440:9 443:11
                446:4 450:4 458:3 465:5 471:11 475:6 478:8 483:8 488:4 493:9 496:2 500:0 502:3 504:2`)
        },
        {
            fill: "#7d0018", line: "#ff3c10", width: 2,
            points: parse(`0:1 4:0 10:0 13:1 15:0 22:0 27:5 31:8 34:12 36:4 37:0 40:0 41:5 44:1 50:2 62:2 66:0 69:3 75:2 84:2 86:0
                88:2 90:0 92:2 94:0 97:3 103:1 105:0 112:1 118:0 130:1 134:0 150:0 152:2 163:2 172:2 186:1 188:3 192:1 199:2 206:0
                210:0 214:3 225:2 232:3 235:7 240:7 243:1 246:0 255:0 258:1 260:0 262:0 266:2 272:1 281:3 290:1 300:0 303:1 306:0
                312:0 318:2 330:3 340:4 349:5 352:2 358:1 362:0 368:0 372:2 378:6 381:3 386:1 390:2 393:0 395:1 398:0 432:0 434:8
                436:12 440:8 443:10 446:2 452:3 458:2 464:4 468:6 471:11 474:7 476:5 480:6 488:3 492:5 495:1 498:0 501:2 504:1`)
        },
        // the warning line stays visible over the grey peak
        { fill: "none", line: "#f4ee2a", width: 1, points: parse("376:5 378:8 381:9 383:4 391:4 393:1") },
        { fill: "none", line: "#f4ee2a", width: 1, points: parse("408:2 418:2 419:1 433:1 435:14") }
    ],
    cols: [174, 248, 269, 338, 359, 459],
    legend: [
        ["#f0101c", ["Nb services CRITIQUE", "Last:", "1.01", "Max:", "13.93", "Average:", "2.39&nbsp;"]],
        ["#f0ec28", ["Nb services WARNING", "Last:", "2.01", "Max:", "6.93", "Average:", "1.81&nbsp;"]],
        ["#928e92", ["Nb services INCONNU", "Last:", "0.00", "Max:", "15.00", "Average:", "545.31m"]]
    ]
});

draw("centstorage", {
    title: "OVERMON-MYSQL-DATABASE-SIZE-CENTSTORAGE graph on OVS-PROD.TLT",
    period: "From 2014/10/14 17:55 to 2014/11/14 16:55",
    max: 26.4,
    vertical: [3, 15.8, 7, 6],
    horizontal: [1, 5],
    yTicks: [[0, "0&nbsp;&nbsp;"], [5, "5 k"], [10, "10 k"], [15, "15 k"], [20, "20 k"], [25, "25 k"]],
    xTicks: [[158, "21/10"], [269, "27/10"], [379, "03/11"], [489, "10/11"]],
    series: [{ fill: "#7c9281", line: "#f4f0d8", width: 1, points: parse("206:21.4 245:22.2 290:23 340:24 390:24.8 440:25.6 487:26.3") }],
    cols: [199, 279],
    legend: [["#fffbd8", ["Taille centstorage (MBs)", "Last:", "26.23k"]]]
});

draw("centstatus", {
    title: "OVERMON-MYSQL-DATABASE-SIZE-CENTSTATUS graph on OVS-PROD.TLT",
    period: "From 2014/10/14 17:54 to 2014/11/14 16:54",
    max: 3.92,
    vertical: [3, 16.3, 7, 6],
    horizontal: [0.2, 5],
    yTicks: [[0, "0.0&nbsp;&nbsp;"], [1, "1.0 k"], [2, "2.0 k"], [3, "3.0 k"]],
    xTicks: [[162, "21/10"], [276, "27/10"], [390, "03/11"], [504, "10/11"]],
    series: [{
        fill: "#5e0068", line: "#d822dc", width: 1,
        points: parse("212:3.67 232:3.68 250:3.73 270:3.76 296:3.77 299:3.71 340:3.74 352:3.79 385:3.8 405:3.85 412:3.81 436:3.83 460:3.87 478:3.9 504:3.91")
    }],
    cols: [192, 273],
    legend: [["#e61ee0", ["Taille centstatus (MBs)", "Last:", "3.90k"]]]
});

const spikes = Array.from({ length: 143 }, (_, i) => 6 + 4 * Math.abs(Math.sin(i * 1.3)) + 3 * Math.sin(i * 0.4));
spikes[60] = 23.2;
spikes[72] = 23.5;
spikes[73] = 27;
spikes[119] = 25.3;
spikes[120] = 23.9;
const cpuCols = [110, 185, 206, 275, 296, 390];
const procCols = [110, 185, 206, 275, 296, 365, 386, 479];

draw("cpu-ovp1", {
    title: "NRPE-LINUX-CPU-LOAD graph on OVP1-PROD.TLT",
    period: "From 2014/11/14 4:55 to 2014/11/14 16:55",
    max: 27.2,
    vertical: [2, 20.4, 2, 0],
    horizontal: [1, 5],
    yTicks: [0, 5, 10, 15, 20, 25].map(v => [v, v]),
    xTicks: [[104, "06:00"], [185, "08:00"], [267, "10:00"], [348, "12:00"], [429, "14:00"], [511, "16:00"]],
    series: cpu(spikes, 484, [0.85, 1.2], [0.58, 1.3]),
    cols: cpuCols,
    legend: [
        ["#c8c860", ["lorocesses", "Last:", "-nan", "Min:", "-nan", "Max:", "-nan", "Average:", "-nan"], procCols],
        ["#f0d810", ["1 minute", "Last:", "2.10", "Max:", "14.20", "Average:", "3.05"]],
        ["#e88018", ["5 minutes", "Last:", "2.84", "Max:", "7.31", "Average:", "2.98"]],
        ["#f02410", ["15 minutes", "Last:", "3.02", "Max:", "5.60", "Average:", "2.91"]]
    ]
});

draw("cpu-ovp2", {
    title: "NRPE-LINUX-CPU-LOAD graph on OVP2-PROD.TLT",
    period: "From 2014/11/14 4:55 to 2014/11/14 16:55",
    max: 24,
    vertical: [2, 21, 2, 0],
    horizontal: [1, 5],
    yTicks: [0, 5, 10, 15, 20].map(v => [v, v]),
    xTicks: [[105, "06:00"], [189, "08:00"], [273, "10:00"], [358, "12:00"], [442, "14:00"], [526, "16:00"]],
    series: cpu([7, 4, 5, 4.5, 3.7, 3.5, 5, 7.6, 7.5, 7, 10.4, 14.3, 7.5, 7.5, 9.3, 13, 11, 8.5, 10.5, 15.4, 9.5, 8.3, 7.5, 8.4, 5,
        3.3, 3, 8.5, 9, 9, 9, 12.4, 8, 6, 4, 12.8, 11.3, 10, 8.5, 13.7, 13.5, 11, 4, 5.6, 6.2, 5.5, 4, 4, 7.5, 9.5, 6, 5, 7.5,
        9.5, 6.5, 5, 16.5, 12.4, 8.8, 9, 8, 15.5, 8.5, 10.2, 7.5, 10.6, 6, 4, 5, 7.5, 9.4, 7, 9.8, 8.5, 8.5, 8.4, 7, 15.2, 14,
        12.5, 7, 24, 17, 14, 8, 14.3, 9, 5.5, 5, 6, 8.2, 7.5, 6, 6.7, 6.5, 5, 5, 11.7, 14.4, 7.5, 9.3, 12.4, 17.2, 9.8, 8.3,
        10, 7.7, 4, 3.7, 4, 6, 8, 6, 5.3, 7, 7.4, 5.2, 5, 11.2, 8, 11, 7, 14.6, 16, 19.4, 9.8, 9, 6, 4, 3, 3, 8.8, 5.5, 6.7,
        5, 9, 6, 7.4, 6, 7.5, 7.8, 10.8, 8], 502, [0.85, 1.2], [0.58, 1.3]),
    cols: cpuCols,
    legend: [
        ["#c8c860", ["lorocesses", "Last:", "-nan", "Min:", "-nan", "Max:", "-nan", "Average:", "-nan"], procCols],
        ["#f0d810", ["1 minute", "Last:", "1.38", "Max:", "13.33", "Average:", "2.92"]],
        ["#e88018", ["5 minutes", "Last:", "3.38", "Max:", "6.77", "Average:", "2.69"]],
        ["#f02410", ["15 minutes", "Last:", "3.22", "Max:", "5.24", "Average:", "2.74"]]
    ]
});

// refresh / configure / collapse buttons of every widget
document.querySelectorAll(".widget-head").forEach(head => {
    [["refresh", "Rafraîchir"], ["wrench", "Configurer"], ["minus", "Réduire"]].forEach(([icon, label]) => {
        head.insertAdjacentHTML("beforeend",
            `<button type="button" aria-label="${label}"><svg width="9" height="10"><use href="#i-${icon}"/></svg></button>`);
    });
});
```
